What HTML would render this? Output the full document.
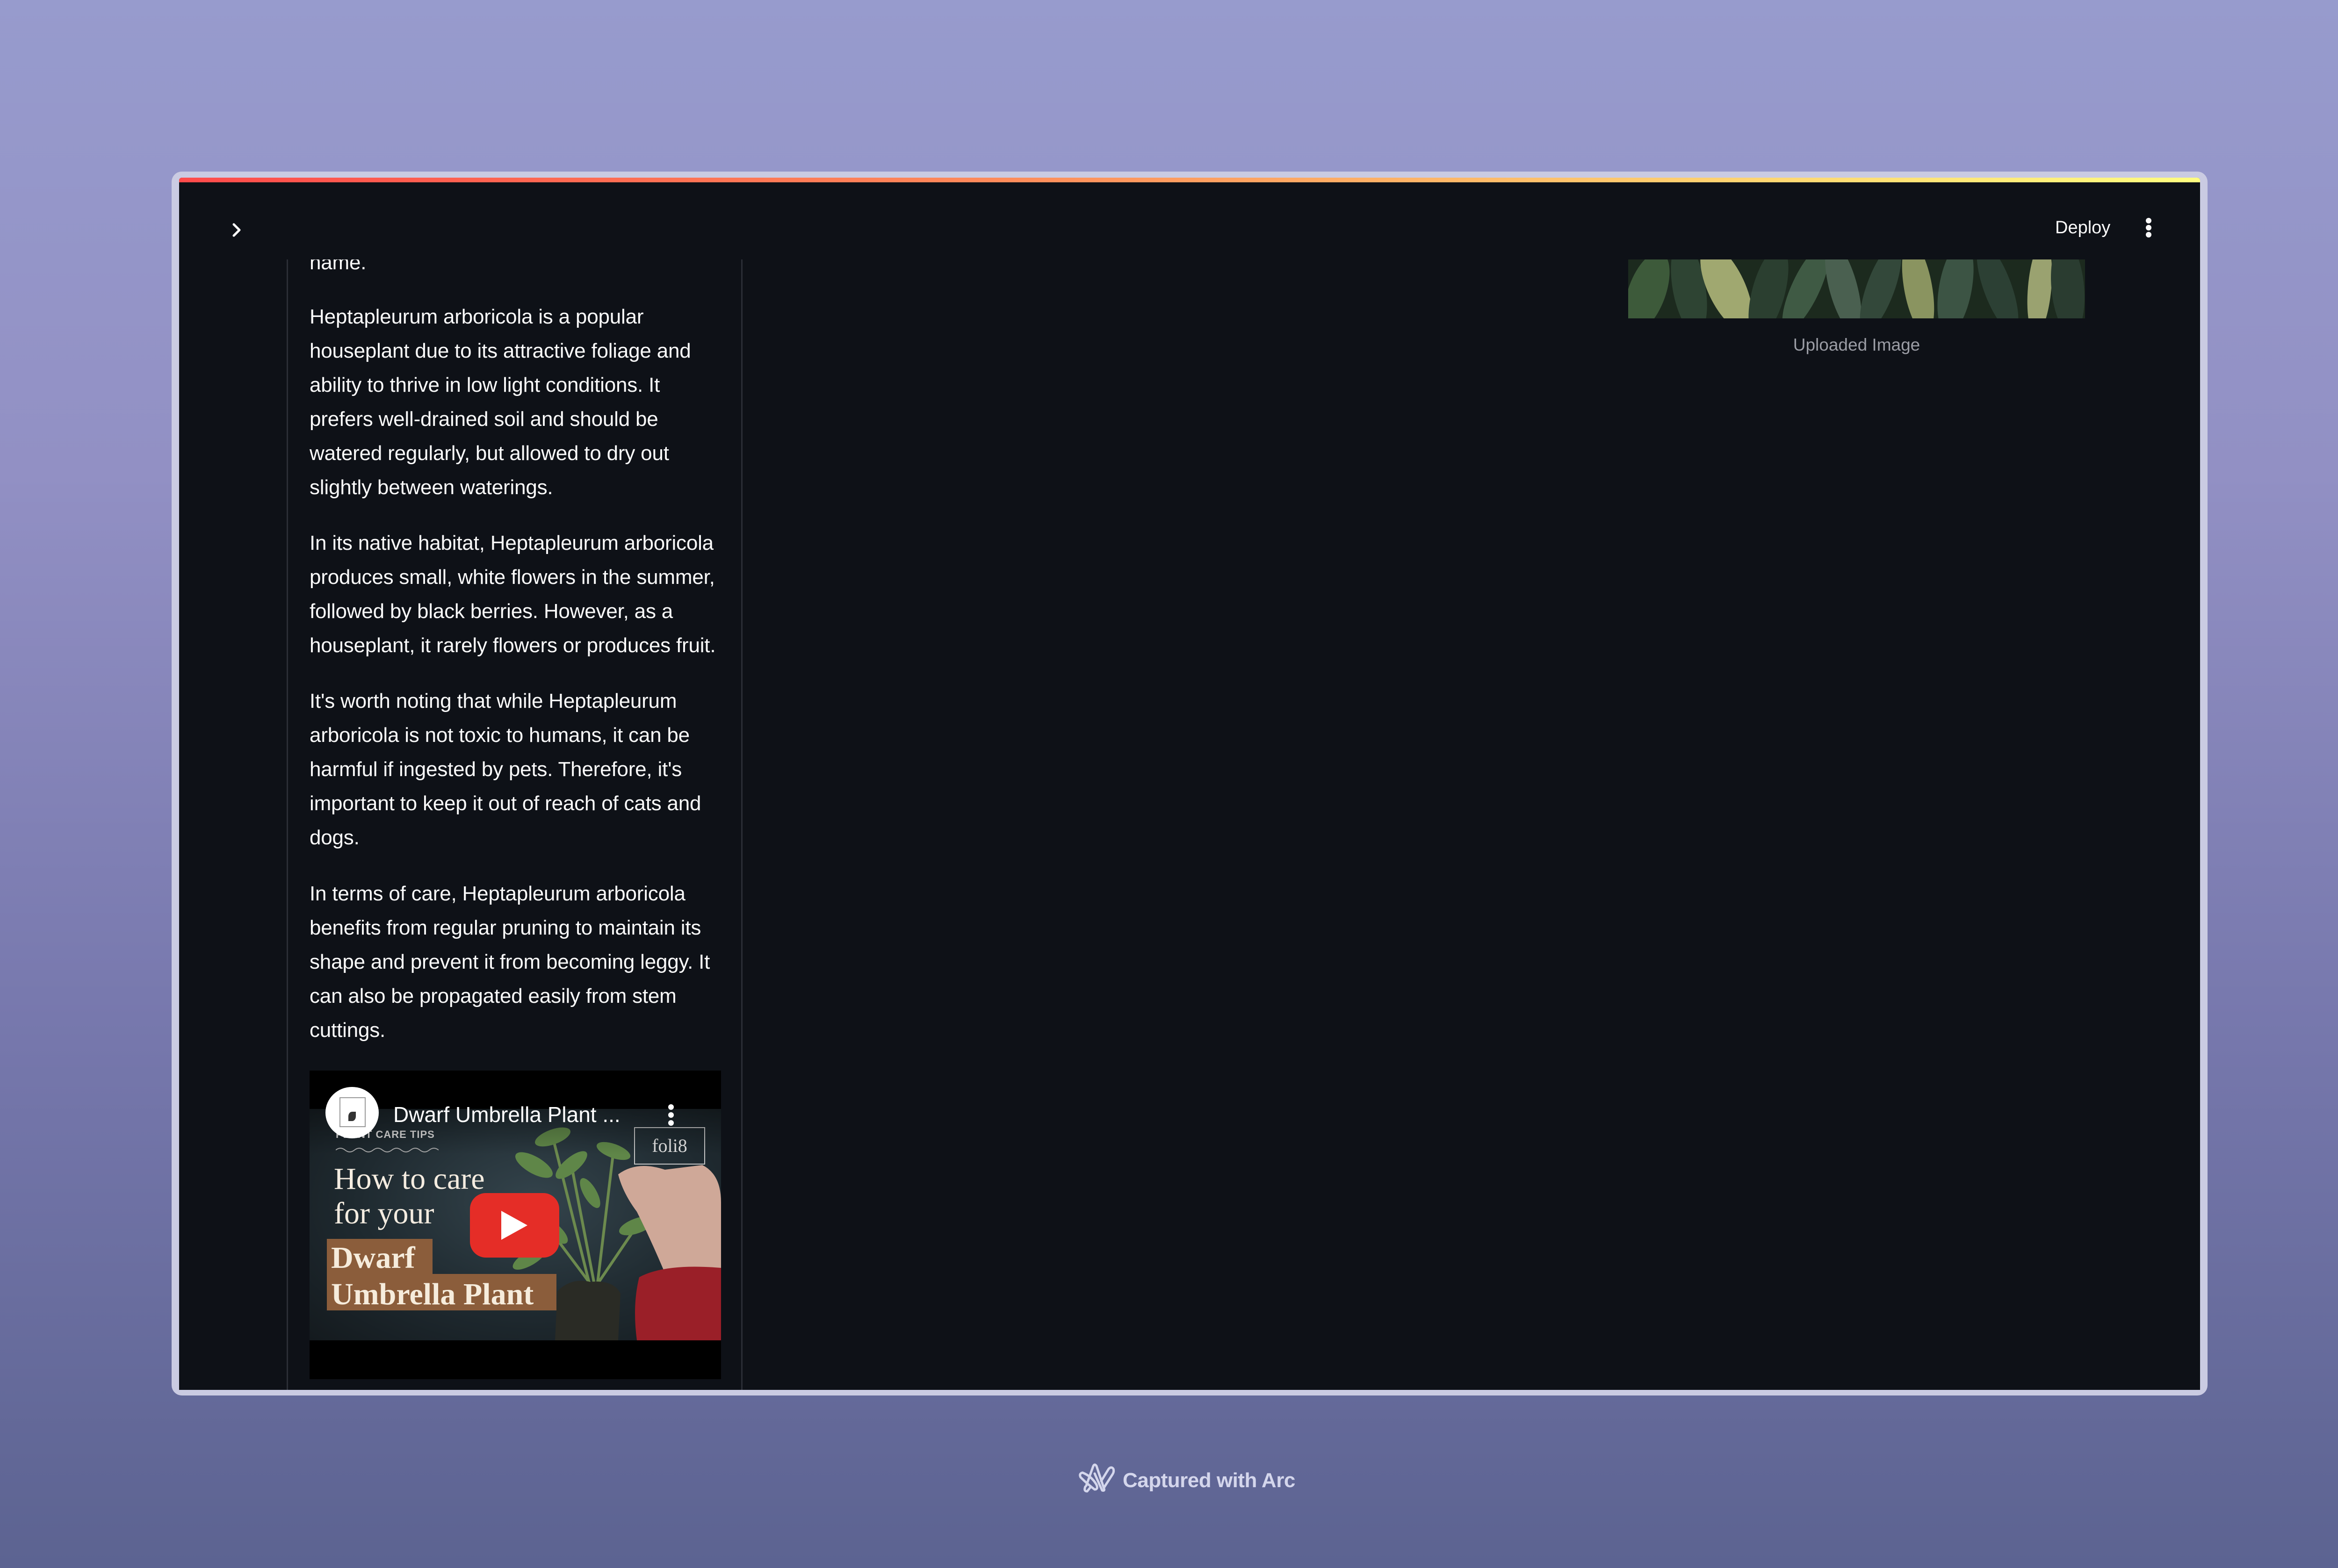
<!DOCTYPE html>
<html><head><meta charset="utf-8"><style>
*{margin:0;padding:0;box-sizing:border-box}
html,body{width:5088px;height:3354px;overflow:hidden}
body{background:linear-gradient(180deg,#979bcd 0%,#9290c4 30%,#7778ad 65%,#5c6391 100%);font-family:"Liberation Sans",sans-serif;position:relative}
.frame{position:absolute;left:367px;top:367px;width:4354px;height:2618px;background:#cacbe2;border-radius:22px}
.win{position:absolute;left:383px;top:380px;width:4322px;height:2593px;background:#0e1117;overflow:hidden;border-radius:6px 6px 0 0}
.bar{position:absolute;left:0;top:0;width:100%;height:10px;background:linear-gradient(90deg,#ff4b4b,#ff8a5a 40%,#ffd070 75%,#fffd80)}
.abs{position:absolute}
.line{position:absolute;white-space:nowrap;color:#fafafa;font-size:44px;line-height:73px;letter-spacing:-0.2px}
</style></head><body>
<div class="frame"></div>
<div class="win">
  <div class="bar"></div>
  <svg class="abs" style="left:108px;top:92px" width="30" height="40" viewBox="0 0 30 40"><path d="M9 8 L21 20 L9 32" stroke="#fafafa" stroke-width="5" fill="none" stroke-linecap="round" stroke-linejoin="round"/></svg>
  <div class="abs" style="left:4012px;top:84px;color:#fafafa;font-size:38px;line-height:46px">Deploy</div>
  <div class="abs" style="left:4206px;top:84px;width:12px;height:46px">
    <div class="abs" style="left:0;top:2px;width:12px;height:12px;border-radius:6px;background:#fafafa"></div>
    <div class="abs" style="left:0;top:17px;width:12px;height:12px;border-radius:6px;background:#fafafa"></div>
    <div class="abs" style="left:0;top:32px;width:12px;height:12px;border-radius:6px;background:#fafafa"></div>
  </div>
  <div class="abs" style="left:230px;top:175px;width:3px;height:2420px;background:#2b2e36"></div>
  <div class="abs" style="left:1202px;top:175px;width:3px;height:2420px;background:#2b2e36"></div>
</div>
<div class="abs" style="left:383px;top:555px;width:4322px;height:2418px;overflow:hidden">
  <div style="position:absolute;left:-383px;top:-555px">
  <div class="line" style="left:662px;top:525px">name.</div>
  <div class="line" style="left:662px;top:641px">Heptapleurum arboricola is a popular</div>
  <div class="line" style="left:662px;top:714px">houseplant due to its attractive foliage and</div>
  <div class="line" style="left:662px;top:787px">ability to thrive in low light conditions. It</div>
  <div class="line" style="left:662px;top:860px">prefers well-drained soil and should be</div>
  <div class="line" style="left:662px;top:933px">watered regularly, but allowed to dry out</div>
  <div class="line" style="left:662px;top:1006px">slightly between waterings.</div>
  <div class="line" style="left:662px;top:1125px">In its native habitat, Heptapleurum arboricola</div>
  <div class="line" style="left:662px;top:1198px">produces small, white flowers in the summer,</div>
  <div class="line" style="left:662px;top:1271px">followed by black berries. However, as a</div>
  <div class="line" style="left:662px;top:1344px">houseplant, it rarely flowers or produces fruit.</div>
  <div class="line" style="left:662px;top:1463px">It's worth noting that while Heptapleurum</div>
  <div class="line" style="left:662px;top:1536px">arboricola is not toxic to humans, it can be</div>
  <div class="line" style="left:662px;top:1609px">harmful if ingested by pets. Therefore, it's</div>
  <div class="line" style="left:662px;top:1682px">important to keep it out of reach of cats and</div>
  <div class="line" style="left:662px;top:1755px">dogs.</div>
  <div class="line" style="left:662px;top:1875px">In terms of care, Heptapleurum arboricola</div>
  <div class="line" style="left:662px;top:1948px">benefits from regular pruning to maintain its</div>
  <div class="line" style="left:662px;top:2021px">shape and prevent it from becoming leggy. It</div>
  <div class="line" style="left:662px;top:2094px">can also be propagated easily from stem</div>
  <div class="line" style="left:662px;top:2167px">cuttings.</div>

  <div class="abs" style="left:662px;top:2290px;width:880px;height:660px;background:#000;overflow:hidden">
    <div class="abs" style="left:0;top:82px;width:880px;height:495px;background:radial-gradient(ellipse at 55% 40%,#34444c 0%,#1f2a30 55%,#141a1e 100%)"></div>
    <svg class="abs" style="left:0;top:82px" width="880" height="495" viewBox="0 0 880 495">
      <path d="M610 380 L560 120 M600 380 L520 60 M615 380 L650 90 M605 380 L470 200 M612 380 L700 250" stroke="#6c8a4e" stroke-width="6" fill="none"/>
      <g fill="#5f8648">
        <ellipse cx="520" cy="60" rx="40" ry="16" transform="rotate(-20 520 60)"/>
        <ellipse cx="480" cy="120" rx="45" ry="18" transform="rotate(30 480 120)"/>
        <ellipse cx="560" cy="120" rx="42" ry="16" transform="rotate(-40 560 120)"/>
        <ellipse cx="650" cy="90" rx="38" ry="15" transform="rotate(20 650 90)"/>
        <ellipse cx="450" cy="210" rx="46" ry="18" transform="rotate(-10 450 210)"/>
        <ellipse cx="520" cy="260" rx="40" ry="16" transform="rotate(40 520 260)"/>
        <ellipse cx="700" cy="250" rx="40" ry="16" transform="rotate(-20 700 250)"/>
        <ellipse cx="600" cy="180" rx="36" ry="14" transform="rotate(60 600 180)"/>
        <ellipse cx="470" cy="320" rx="40" ry="15" transform="rotate(-30 470 320)"/>
      </g>
      <path d="M530 390 Q560 360 600 370 Q650 365 665 395 L660 495 L525 495 Z" fill="#2a2b25"/>
      <path d="M660 140 Q700 110 760 130 L840 120 Q880 140 880 200 L880 380 Q830 420 780 400 Q740 300 700 220 Q670 180 660 140 Z" fill="#cfa898"/>
      <path d="M705 360 Q760 330 880 340 L880 495 L700 495 Q690 420 705 360 Z" fill="#9a1f28"/>
    </svg>
    <div class="abs" style="left:56px;top:124px;color:#d8d8d8;font-size:22px;font-weight:bold;letter-spacing:1px">PLANT CARE TIPS</div>
    <svg class="abs" style="left:56px;top:160px" width="220" height="20"><path d="M0 10 Q10 2 20 10 T40 10 T60 10 T80 10 T100 10 T120 10 T140 10 T160 10 T180 10 T200 10 T220 10" stroke="#aaa" stroke-width="2" fill="none"/></svg>
    <div class="abs" style="left:52px;top:195px;color:#f4ece0;font-family:'Liberation Serif',serif;font-size:66px;line-height:74px;white-space:nowrap">How to care<br>for your</div>
    <div class="abs" style="left:37px;top:360px;width:226px;height:78px;background:#8b5d3b"></div>
    <div class="abs" style="left:37px;top:435px;width:491px;height:78px;background:#8b5d3b"></div>
    <div class="abs" style="left:46px;top:362px;color:#f6ecdc;font-family:'Liberation Serif',serif;font-weight:bold;font-size:66px;line-height:78px;white-space:nowrap">Dwarf<br>Umbrella Plant</div>
    <div class="abs" style="left:694px;top:121px;width:152px;height:80px;border:2px solid #c8c8c8;color:#e0e0e0;font-family:'Liberation Serif',serif;font-size:40px;line-height:76px;text-align:center">foli8</div>
    <div class="abs" style="left:0;top:0;width:880px;height:180px;background:linear-gradient(180deg,rgba(0,0,0,.6),rgba(0,0,0,0))"></div>
    <div class="abs" style="left:34px;top:35px;width:114px;height:110px;border-radius:50%;background:#fff"></div>
    <div class="abs" style="left:64px;top:57px;width:56px;height:64px;border:2px solid #999"></div>
    <div class="abs" style="left:83px;top:88px;width:16px;height:20px;border-radius:50% 0 50% 0;background:#333"></div>
    <div class="abs" style="left:179px;top:64px;color:#fff;font-size:46px;line-height:60px;white-space:nowrap">Dwarf Umbrella Plant ...</div>
    <div class="abs" style="left:767px;top:72px;width:12px;height:12px;border-radius:6px;background:#fff"></div>
    <div class="abs" style="left:767px;top:89px;width:12px;height:12px;border-radius:6px;background:#fff"></div>
    <div class="abs" style="left:767px;top:106px;width:12px;height:12px;border-radius:6px;background:#fff"></div>
    <div class="abs" style="left:343px;top:262px;width:191px;height:138px;border-radius:34px;background:#e52d27"></div>
    <svg class="abs" style="left:410px;top:300px" width="60" height="62"><path d="M0 0 L56 31 L0 62 Z" fill="#fff"/></svg>
  </div>

  <svg class="abs" style="left:3482px;top:555px" width="977" height="126" viewBox="0 0 977 126">
    <rect width="977" height="126" fill="#1c2a1e"/>
    <g>
      <ellipse cx="40" cy="70" rx="40" ry="90" fill="#3d5a3a" transform="rotate(20 40 70)"/>
      <ellipse cx="130" cy="60" rx="35" ry="100" fill="#2e4433" transform="rotate(-10 130 60)"/>
      <ellipse cx="210" cy="60" rx="40" ry="100" fill="#a0a870" transform="rotate(-25 210 60)"/>
      <ellipse cx="300" cy="70" rx="35" ry="100" fill="#2b3f30" transform="rotate(15 300 70)"/>
      <ellipse cx="380" cy="60" rx="30" ry="100" fill="#3f5a44" transform="rotate(25 380 60)"/>
      <ellipse cx="460" cy="60" rx="30" ry="100" fill="#4a6050" transform="rotate(-15 460 60)"/>
      <ellipse cx="540" cy="60" rx="30" ry="100" fill="#33483a" transform="rotate(20 540 60)"/>
      <ellipse cx="620" cy="60" rx="30" ry="100" fill="#8a9460" transform="rotate(-10 620 60)"/>
      <ellipse cx="700" cy="60" rx="35" ry="100" fill="#3c5444" transform="rotate(10 700 60)"/>
      <ellipse cx="790" cy="60" rx="30" ry="100" fill="#2c4034" transform="rotate(-20 790 60)"/>
      <ellipse cx="880" cy="60" rx="25" ry="100" fill="#9aa270" transform="rotate(5 880 60)"/>
      <ellipse cx="940" cy="60" rx="35" ry="100" fill="#2a3c30" transform="rotate(-5 940 60)"/>
    </g>
  </svg>
  <div class="abs" style="left:3482px;top:715px;width:977px;text-align:center;color:#9a9ca4;font-size:37px;line-height:46px">Uploaded Image</div>
  </div>
</div>

<svg class="abs" style="left:2305px;top:3128px" width="82" height="66" viewBox="0 0 82 66">
  <g stroke="#d4d6ec" stroke-width="5" fill="none" stroke-linecap="round" stroke-linejoin="round">
    <path d="M18 50 L33 8 Q36 2 40 8 L56 56 Q58 62 52 60 L36 24"/>
    <path d="M6 32 Q2 24 10 22 Q30 30 40 48 Q44 58 36 58 Q20 46 6 32 Z"/>
    <path d="M50 40 L66 14 Q72 8 76 14 Q78 20 74 26 L56 54"/>
    <path d="M16 52 Q12 62 20 62 L28 52"/>
  </g>
</svg>
<div class="abs" style="left:2401px;top:3140px;color:#d4d6ec;font-size:44px;font-weight:bold;line-height:54px;white-space:nowrap;letter-spacing:-0.5px">Captured with Arc</div>
</body></html>
